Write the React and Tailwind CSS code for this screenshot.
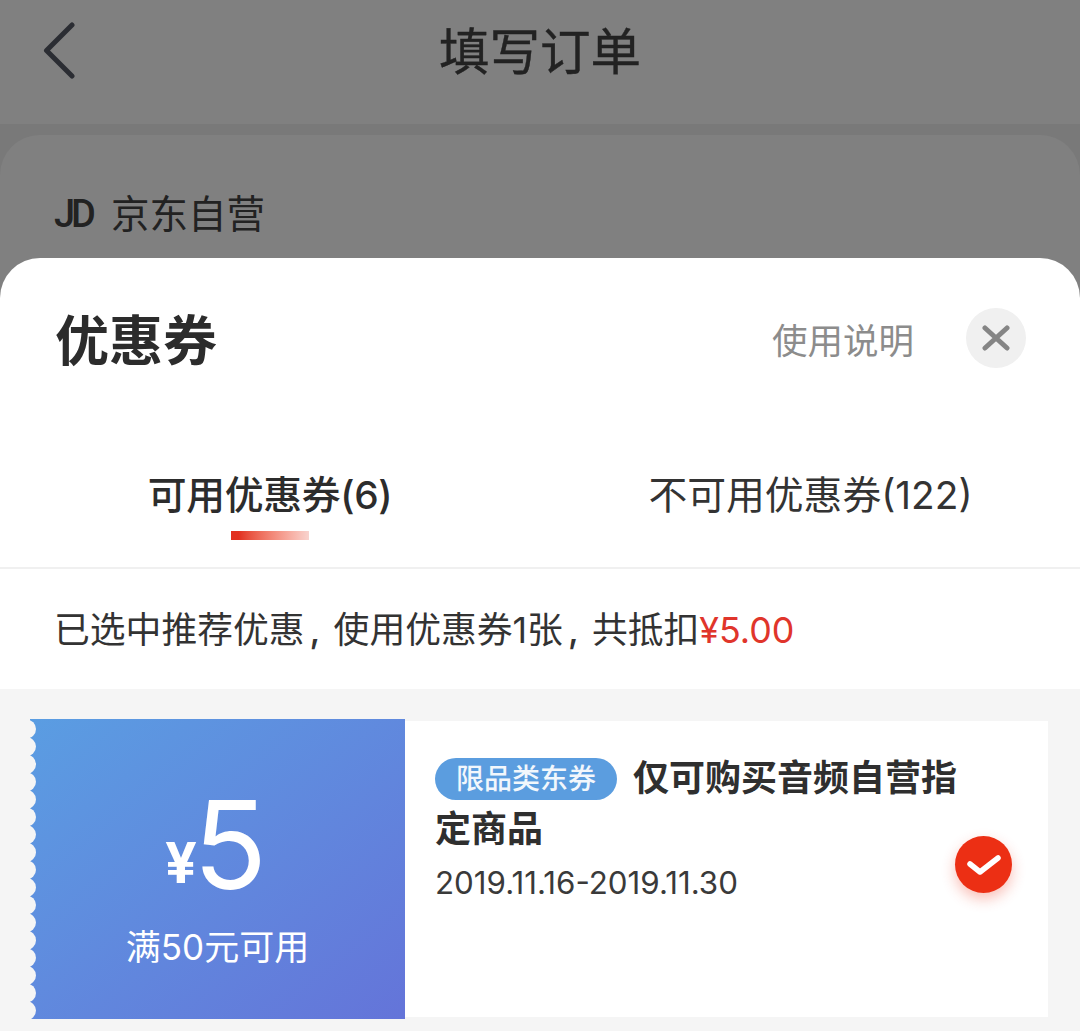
const font = "font-['Inter','Noto_Sans_CJK_SC',sans-serif]";

const ScallopEdge = () => {
  const dots = Array.from({ length: 17 }, (_, i) => i);
  return (
    <svg className="absolute left-0 top-0 h-[300px] w-[8px]" viewBox="0 0 8 300">
      {dots.map((i) => (
        <circle key={i} cx="-3.5" cy={10 + i * 17.6} r="9.5" fill="#f5f5f5" />
      ))}
    </svg>
  );
};

const Coupon = () => (
  <div className="ml-[30px] mt-[30px] flex h-[300px] w-[1018px]">
    <div className="relative flex w-[375px] shrink-0 flex-col items-center bg-gradient-to-br from-[#5a9de2] to-[#6474d9] text-white">
      <ScallopEdge />
      <div className="mt-[66px] flex h-[120px] items-end pr-[3px]">
        <span className="mb-[14px] mr-[-4px] text-[56px] leading-none font-bold">¥</span>
        <span className="text-[122px] leading-[120px]">5</span>
      </div>
      <div className="mt-[20px] text-[35px] leading-[44px]">满50元可用</div>
    </div>
    <div className="my-[2px] flex flex-1 items-start bg-white pl-[30px] pt-[32px]">
      <div className="w-[524px] text-[#2f2f2f]">
        <div className="text-[36px] leading-[51px] font-bold">
          <span className="mr-[16px] inline-block h-[42px] w-[182px] rounded-full bg-[#5b9ddf] text-center align-[2px] text-[28px] leading-[42px] font-medium text-[#f2f7fc]">
            限品类东券
          </span>
          仅可购买音频自营指定商品
        </div>
        <div className="mt-[3px] text-[31.3px] leading-[50px] text-[#3a3a3a]">2019.11.16-2019.11.30</div>
      </div>
      <div className="ml-[-4px] mt-[83px] flex h-[57px] w-[57px] items-center justify-center rounded-full bg-[#ec2f14] shadow-[0_6px_14px_rgba(236,47,20,0.3)]">
        <svg width="36" height="26" viewBox="0 0 36 26" fill="none">
          <path d="M4 12l10 8L32 6" stroke="#fff" strokeWidth="5.5" strokeLinecap="round" strokeLinejoin="round" />
        </svg>
      </div>
    </div>
  </div>
);

export default function App() {
  return (
    <div className={`relative h-[1031px] w-[1080px] overflow-hidden bg-[#797979] ${font}`}>
      {/* page behind the sheet */}
      <div className="relative flex h-[124px] items-center justify-center bg-[#808080] pb-[20px]">
        <svg className="absolute left-[43px] top-[22px]" width="34" height="58" viewBox="0 0 34 58" fill="none">
          <path d="M29 3L3.5 28.5 29 54" stroke="#2b2d33" strokeWidth="5" strokeLinecap="round" strokeLinejoin="round" />
        </svg>
        <span className="text-[50.5px] leading-none text-[#222] [-webkit-text-stroke:0.4px_#222]">填写订单</span>
      </div>
      <div className="mt-[11px] h-[300px] rounded-t-[40px] bg-[#808080] pl-[54px] pt-[56px]">
        <div className="flex items-center text-[#222]">
          <span className="w-[57px] font-['Roboto'] text-[38px] leading-[46px] font-medium tracking-[-4px]">JD</span>
          <span className="text-[38.5px] leading-[46px]">京东自营</span>
        </div>
      </div>

      {/* coupon sheet */}
      <div className="absolute inset-x-0 bottom-0 top-[258px] flex flex-col rounded-t-[40px] bg-white">
        <div className="flex h-[164px] items-start pl-[55px] pr-[54px] pt-[52px]">
          <span className="text-[54px] leading-[64px] font-bold text-[#2c2c2c]">优惠券</span>
          <span className="ml-auto mt-[10px] text-[35.5px] leading-[44px] text-[#8c8c8c]">使用说明</span>
          <div className="ml-[52px] mt-[-2px] flex h-[60px] w-[60px] items-center justify-center rounded-full bg-[#f0f0f0]">
            <svg width="28" height="28" viewBox="0 0 28 28" fill="none">
              <path d="M3 4l22 20M25 4L3 24" stroke="#858585" strokeWidth="5" strokeLinecap="round" />
            </svg>
          </div>
        </div>

        <div className="grid h-[147px] grid-cols-2 border-b-2 border-[#f0f0f0]">
          <div className="flex flex-col items-center pt-[48px]">
            <span className="text-[38.8px] leading-[50px] font-medium tracking-[-0.3px] text-[#2c2c2c]">可用优惠券(6)</span>
            <div className="mt-[11px] h-[9px] w-[78px] bg-gradient-to-r from-[#e2301f] from-10% to-[#f8d3ce]" />
          </div>
          <div className="flex justify-center pt-[48px] pl-[1px]">
            <span className="text-[38.8px] leading-[50px] text-[#333]">不可用优惠券(122)</span>
          </div>
        </div>

        <div className="flex h-[120px] items-center pl-[54px] pt-[4px] text-[35.8px] text-[#333]">
          已选中推荐优惠<span className="w-[29px] pl-[5px] font-medium">,</span>使用优惠券1张<span className="w-[29px] pl-[5px] font-medium">,</span>共抵扣<span className="text-[#e0352b]">¥5.00</span>
        </div>

        <div className="flex-1 bg-[#f5f5f5]">
          <Coupon />
        </div>
      </div>
    </div>
  );
}
